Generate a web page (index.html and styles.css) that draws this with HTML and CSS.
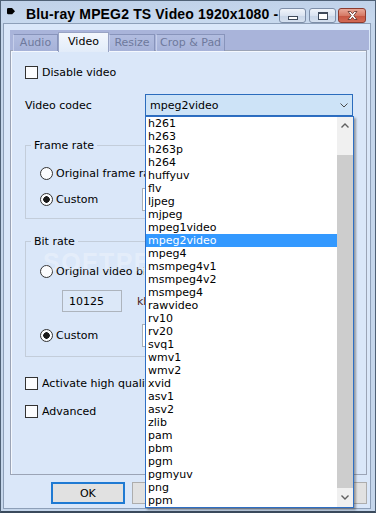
FILE: index.html
```html
<!DOCTYPE html>
<html>
<head>
<meta charset="utf-8">
<title>Blu-ray MPEG2 TS Video 1920x1080</title>
<link rel="stylesheet" href="styles.css">
</head>
<body>
<div class="window">
  <div class="titlebar">
    <svg class="appicon" width="8" height="7" viewBox="0 0 8 7"><path d="M1.2 0H5L8 3.2L5.2 6.2H1.2Q0 6.2 0 5V1.2Q0 0 1.2 0Z" fill="#000"/></svg>
    <div class="title">Blu-ray MPEG2 TS Video 1920x1080 - Settings</div>
    <div class="capbtn cap-min"><span class="glyph-min"></span></div>
    <div class="capbtn cap-max"><span class="glyph-max"></span></div>
    <div class="capbtn cap-close">
      <svg width="11" height="9" viewBox="0 0 11 9"><path d="M1 0.5H3.6L5.5 2.7L7.4 0.5H10L6.8 4.5L10 8.5H7.4L5.5 6.3L3.6 8.5H1L4.2 4.5Z" fill="#fff" stroke="#5a2a22" stroke-width="0.8" stroke-linejoin="round"/></svg>
    </div>
  </div>
  <div class="client">
    <div class="tabstrip">
      <div class="tab tab-audio">Audio</div>
      <div class="tab tab-sel tab-video">Video</div>
      <div class="tab tab-resize">Resize</div>
      <div class="tab tab-crop">Crop &amp; Pad</div>
    </div>
    <div class="page">
      <div class="watermark">SOFTPEDIA</div>
      <div class="check-row row-disable"><span class="checkbox"></span><span>Disable video</span></div>
      <div class="codec-row">
        <span class="codec-label">Video codec</span>
        <div class="combo">
          <span class="combo-value">mpeg2video</span>
          <svg class="combo-arrow" width="8" height="5" viewBox="0 0 8 5"><path d="M0.5 0.5L4 4L7.5 0.5" fill="none" stroke="#4a4a4a" stroke-width="1"/></svg>
          <div class="droplist">
            <ul class="items">
              <li>h261</li><li>h263</li><li>h263p</li><li>h264</li><li>huffyuv</li>
              <li>flv</li><li>ljpeg</li><li>mjpeg</li><li>mpeg1video</li><li class="sel">mpeg2video</li>
              <li>mpeg4</li><li>msmpeg4v1</li><li>msmpeg4v2</li><li>msmpeg4</li><li>rawvideo</li>
              <li>rv10</li><li>rv20</li><li>svq1</li><li>wmv1</li><li>wmv2</li>
              <li>xvid</li><li>asv1</li><li>asv2</li><li>zlib</li><li>pam</li>
              <li>pbm</li><li>pgm</li><li>pgmyuv</li><li>png</li><li>ppm</li>
            </ul>
            <div class="vscroll">
              <div class="sb-btn sb-up"><svg width="8" height="5" viewBox="0 0 8 5"><path d="M0.5 4.5L4 1L7.5 4.5" fill="none" stroke="#606060" stroke-width="1.4"/></svg></div>
              <div class="sb-gap"></div>
              <div class="sb-thumb"></div>
              <div class="sb-btn sb-down"><svg width="8" height="5" viewBox="0 0 8 5"><path d="M0.5 0.5L4 4L7.5 0.5" fill="none" stroke="#606060" stroke-width="1.4"/></svg></div>
            </div>
          </div>
        </div>
      </div>
      <fieldset class="group group-frame">
        <legend>Frame rate</legend>
        <div class="group-body body-frame">
          <div class="radio-row"><span class="radio"></span><span class="clip-text">Original frame rate</span></div>
          <div class="radio-row edit-row row-gap-frame"><span class="radio radio-on"></span><span class="radio-label">Custom</span><span class="textbox textbox-custom"></span></div>
        </div>
      </fieldset>
      <fieldset class="group group-bitrate">
        <legend>Bit rate</legend>
        <div class="group-body body-bitrate">
          <div class="radio-row"><span class="radio"></span><span class="clip-text">Original video bitrate</span></div>
          <div class="value-row">
            <span class="textbox textbox-value">10125</span>
            <span class="unit">kbit/s</span>
          </div>
          <div class="radio-row edit-row row-gap-bitrate"><span class="radio radio-on"></span><span class="radio-label">Custom</span><span class="textbox textbox-custom"></span></div>
        </div>
      </fieldset>
      <div class="check-row row-hq"><span class="checkbox"></span><span class="clip-text">Activate high quality encoding</span></div>
      <div class="check-row row-adv"><span class="checkbox"></span><span>Advanced</span></div>
    </div>
    <div class="buttons">
      <div class="btn btn-default">OK</div>
      <div class="btn">Cancel</div>
      <div class="btn">Apply</div>
      <div class="btn">Help</div>
    </div>
  </div>
</div>
</body>
</html>
```
FILE: styles.css
```css
* { box-sizing: border-box; }
html, body { margin: 0; padding: 0; }
body {
  width: 376px;
  height: 513px;
  overflow: hidden;
  font-family: "DejaVu Sans", sans-serif;
  font-size: 11px;
  color: #000;
  background: #c5d6eb;
}
.window {
  width: 376px;
  height: 513px;
  border: 1px solid #4f6176;
  border-bottom: 2px solid #3a4a5c;
  background: #c5d6eb;
  display: flex;
  flex-direction: column;
  padding: 0 4px 2px 2px;
}
.titlebar {
  margin: 0 -4px 0 -2px;
  height: 22px;
  flex: none;
  display: flex;
  align-items: flex-start;
  padding: 0 9px 0 6px;
  background: linear-gradient(#c0d2e9, #c8d9ee);
}
.appicon { margin-top: 7px; flex: none; }
.title {
  flex: 1;
  min-width: 0;
  margin-left: 11px;
  padding-top: 5px;
  line-height: 17px;
  font-family: "Liberation Sans", Arial, sans-serif;
  font-weight: bold;
  font-size: 14px;
  letter-spacing: 0.15px;
  white-space: nowrap;
  overflow: hidden;
  color: #000;
}
.capbtn {
  flex: none;
  margin-top: 7px;
  width: 27px;
  height: 15px;
  border: 1px solid #7d8ea8;
  border-radius: 3px;
  background: linear-gradient(#f0f4fa, #dbe4f1 50%, #c9d6e8 51%, #d4e0ef);
  display: flex;
  align-items: center;
  justify-content: center;
}
.cap-max { margin-left: 3px; }
.cap-close {
  margin-left: 2px;
  width: 28px;
  border-color: #8c3b2f;
  background: linear-gradient(#e9a898, #d67a66 50%, #c65440 51%, #d36a55);
}
.glyph-min {
  width: 10px;
  height: 4px;
  margin-top: 5px;
  border: 1px solid #3f4a5a;
  background: #fff;
}
.glyph-max {
  width: 10px;
  height: 8px;
  border: 1px solid #3f4a5a;
  border-top-width: 2px;
  background: #fff;
  box-shadow: inset 0 0 0 1px #fff;
}
.client {
  flex: 1;
  min-height: 0;
  border: 1px solid #8d9fb8;
  background: #dae7f9;
  display: flex;
  flex-direction: column;
  padding: 6px 3px 0 6px;
}
.tabstrip {
  flex: none;
  height: 20px;
  background: #a9b4da;
  display: flex;
  align-items: flex-end;
  padding-left: 3px;
  margin-right: -2px;
}
.tab {
  position: relative;
  z-index: 2;
  height: 17px;
  margin-bottom: -1px;
  line-height: 15px;
  text-align: center;
  color: #6e799c;
  background: linear-gradient(#b2bde0, #a6b2d8);
  border: 1px solid #8894bb;
  border-left-color: #c6cfeb;
  border-bottom: none;
  white-space: nowrap;
  overflow: hidden;
}
.tab-audio { width: 45px; }
.tab-video { width: 51px; }
.tab-resize { width: 46px; }
.tab-crop { width: 69px; margin-left: 1px; text-align: left; padding: 0 4px 0 3px; }
.tab-sel {
  height: 20px;
  margin-bottom: -2px;
  line-height: 18px;
  color: #000;
  background: linear-gradient(#f3f7fd, #e2ecf9);
  border: 1px solid #98a3c4;
  border-bottom: none;
}
.page {
  position: relative;
  flex: none;
  height: 425px;
  border: 1px solid #9ba4b6;
  box-shadow: inset 1px 1px 0 #f4f8fe;
  background: #dae7f9;
  padding: 0 13px 0 14px;
}
.watermark {
  position: absolute;
  z-index: 5;
  left: 32px;
  top: 199px;
  font-family: "Liberation Sans", Arial, sans-serif;
  font-weight: bold;
  font-size: 25px;
  line-height: 25px;
  letter-spacing: 1.5px;
  color: rgba(255, 255, 255, 0.3);
  pointer-events: none;
}
.check-row {
  display: flex;
  align-items: center;
  height: 13px;
  line-height: 13px;
  gap: 4px;
  white-space: nowrap;
}
.row-disable { margin-top: 15px; }
.row-hq { margin-top: 20px; }
.row-adv { margin-top: 15px; }
.checkbox {
  flex: none;
  width: 13px;
  height: 13px;
  border: 1px solid #333;
  background: #fbfcfe;
}
.clip-text {
  overflow: hidden;
  white-space: nowrap;
  max-width: 103px;
}
.codec-row {
  margin-top: 15px;
  display: flex;
  align-items: center;
  height: 22px;
}
.codec-label { width: 120px; flex: none; }
.combo {
  position: relative;
  z-index: 10;
  width: 209px;
  height: 22px;
  border: 1px solid #2b6cbd;
  background: #cde3f7;
  display: flex;
  align-items: center;
  padding-left: 4px;
}
.combo-value { flex: 1; }
.combo-arrow { margin-right: 4px; }
.droplist {
  position: absolute;
  left: -1px;
  top: 21px;
  width: 209px;
  border: 1px solid #2e6fc4;
  background: #fff;
  display: flex;
  box-shadow: 2px 2px 2px rgba(60, 60, 60, 0.45);
}
.items {
  list-style: none;
  margin: 0;
  padding: 0;
  flex: 1;
}
.items li {
  height: 13px;
  line-height: 13px;
  padding-left: 2px;
  white-space: nowrap;
  color: #000;
}
.items li.sel { background: #3399ff; color: #fff; }
.vscroll {
  width: 16px;
  flex: none;
  display: flex;
  flex-direction: column;
  background: #f0f0f0;
}
.sb-btn {
  height: 17px;
  display: flex;
  align-items: center;
  justify-content: center;
}
.sb-up { height: 17px; }
.sb-gap { height: 21px; }
.sb-thumb { height: 333px; background: #cdcdcd; }
.sb-down { height: 19px; }
.group {
  margin: 0;
  padding: 0;
  border: 1px solid #c3cdda;
  min-width: 0;
}
.group legend {
  margin-left: 5px;
  padding: 0 3px;
  line-height: 13px;
}
.group-frame { margin-top: 23px; }
.group-bitrate { margin-top: 16px; }
.group-body { padding-left: 14px; }
.body-frame { padding-top: 15px; padding-bottom: 7px; }
.body-bitrate { padding-top: 17px; padding-bottom: 9px; }
.radio-row {
  display: flex;
  align-items: center;
  height: 13px;
  gap: 3px;
  white-space: nowrap;
}
.body-bitrate .clip-text { max-width: 88px; }
.edit-row { height: 23px; }
.row-gap-frame { margin-top: 8px; }
.row-gap-bitrate { margin-top: 12px; }
.radio {
  flex: none;
  width: 13px;
  height: 13px;
  border: 1px solid #333;
  border-radius: 50%;
  background: #fbfcfe;
}
.radio-on { background: radial-gradient(circle, #1a1a1a 0 3px, #fbfcfe 3.5px); }
.radio-label { width: 83px; flex: none; }
.textbox {
  height: 23px;
  border: 1px solid #a8aeb6;
  background: #fff;
  display: flex;
  align-items: center;
  padding-left: 6px;
}
.textbox-custom { width: 60px; }
.value-row {
  margin-top: 12px;
  display: flex;
  align-items: center;
  height: 22px;
  padding-left: 22px;
}
.textbox-value {
  width: 60px;
  height: 22px;
  background: #dce8f8;
  border-color: #adb4bd;
}
.unit { margin-left: 15px; color: #4a1c1c; max-width: 8px; overflow: hidden; }
.buttons {
  display: flex;
  gap: 7px;
  margin-top: 7px;
  padding-left: 41px;
}
.btn {
  width: 74px;
  height: 22px;
  border: 1px solid #adadad;
  background: #e1e1e1;
  display: flex;
  align-items: center;
  justify-content: center;
  color: #000;
}
.btn-default { border: 2px solid #1f7ad3; }
```
